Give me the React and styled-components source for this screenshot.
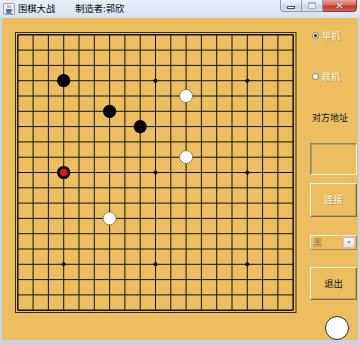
import React from 'react';
import styled, { createGlobalStyle } from 'styled-components';

const Global = createGlobalStyle`
  html, body { margin: 0; padding: 0; background: #ffffff; }
  body { font-family: "Noto Sans CJK SC", "Noto Sans", sans-serif; }
`;

const ORANGE = '#ecbe60';

const Window = styled.div`
  width: 360px;
  height: 344px;
  display: flex;
  flex-direction: column;
  background: #c4d6ec;
  overflow: hidden;
`;

const TitleBar = styled.div`
  height: 18px;
  flex: none;
  display: flex;
  align-items: center;
  padding-left: 3px;
  background: linear-gradient(#e7eef8, #d8e3f1);
`;

const TitleText = styled.span`
  font-size: 9.3px;
  color: #000;
  line-height: 1;
  margin-left: ${(p) => p.$gap}px;
  white-space: nowrap;
`;

const Spacer = styled.div`
  flex: 1;
`;

const WinButtons = styled.div`
  align-self: flex-start;
  display: flex;
  height: 12px;
  margin-right: 3px;
`;

const WinBtn = styled.div`
  width: ${(p) => p.$w}px;
  height: 12px;
  box-sizing: border-box;
  display: flex;
  align-items: center;
  justify-content: center;
  border: 1px solid ${(p) => (p.$close ? '#8d3b34' : '#8e9db3')};
  border-top: none;
  border-left: ${(p) => (p.$first ? '1px solid #8e9db3' : 'none')};
  border-bottom-left-radius: ${(p) => (p.$first ? 4 : 0)}px;
  border-bottom-right-radius: ${(p) => (p.$close ? 4 : 0)}px;
  background: ${(p) =>
    p.$close
      ? 'linear-gradient(#e7a69c 0%, #d46c5f 45%, #c0392b 55%, #d0614f 100%)'
      : 'linear-gradient(#eef3f9 0%, #dbe4ef 45%, #c8d4e3 55%, #d8e2ee 100%)'};
`;

const MinGlyph = styled.div`
  width: 8px;
  height: 3px;
  margin-top: 3px;
  background: #fff;
  border: 1px solid #4a5568;
  box-sizing: border-box;
`;

const MaxGlyph = styled.div`
  width: 8px;
  height: 7px;
  border: 1px solid #a9b5c4;
  border-top-width: 2px;
  box-sizing: border-box;
  background: #e8eef5;
`;

const CloseGlyph = styled.span`
  font-family: "DejaVu Sans", sans-serif;
  font-weight: bold;
  font-size: 10px;
  line-height: 1;
  color: #fff;
  text-shadow: 0 0 1px #6a1a10;
`;

const Body = styled.div`
  flex: 1;
  display: flex;
  margin: 0 2px 4px 2px;
  background: ${ORANGE};
`;

const BoardSvg = styled.svg`
  display: block;
  flex: none;
`;

const SidePanel = styled.div`
  width: 47px;
  margin-left: 2px;
  display: flex;
  flex-direction: column;
`;

const RadioRow = styled.div`
  height: 12px;
  display: flex;
  align-items: center;
  gap: 3px;
  padding-left: 2px;
  margin-top: ${(p) => p.$mt}px;
`;

const RadioCircle = styled.div`
  width: 7px;
  height: 7px;
  box-sizing: border-box;
  border-radius: 50%;
  border: 1px solid #7d8794;
  background: radial-gradient(circle at 40% 40%, #ffffff 30%, #d4d8dd 100%);
  display: flex;
  align-items: center;
  justify-content: center;
  &::after {
    content: '';
    display: ${(p) => (p.$checked ? 'block' : 'none')};
    width: 3px;
    height: 3px;
    border-radius: 50%;
    background: #111;
  }
`;

const DimText = styled.span`
  font-size: 9px;
  line-height: 1;
  color: #fbf6ea;
  text-shadow: 1px 1px 0 rgba(150, 115, 50, 0.55);
  white-space: nowrap;
`;

const AddrLabel = styled.div`
  height: 12px;
  margin-top: 30px;
  padding-left: 2px;
  font-size: 9px;
  line-height: 12px;
  color: #111;
  white-space: nowrap;
`;

const TextBox = styled.div`
  height: 32px;
  margin-top: 19px;
  box-sizing: border-box;
  border: 1px solid;
  border-color: #8a8272 #f6efdf #f6efdf #8a8272;
  box-shadow: inset 1px 1px 0 #b29c6c;
`;

const PanelButton = styled.div`
  height: ${(p) => p.$h}px;
  margin-top: ${(p) => p.$mt}px;
  box-sizing: border-box;
  border: 1px solid;
  border-color: #faf3e1 #7e6e50 #7e6e50 #faf3e1;
  box-shadow: inset -1px -1px 0 #c29f58;
  display: flex;
  align-items: center;
  justify-content: center;
  font-size: 9.3px;
  line-height: 1;
  color: ${(p) => (p.$disabled ? '#fbf6ea' : '#111')};
  text-shadow: ${(p) => (p.$disabled ? '1px 1px 0 rgba(150,115,50,0.55)' : 'none')};
`;

const Combo = styled.div`
  height: 15px;
  margin-top: 18px;
  box-sizing: border-box;
  border: 1px solid;
  border-color: #f6eed9 #9e8754 #9e8754 #f6eed9;
  display: flex;
  align-items: center;
  padding-left: 2px;
`;

const ComboText = styled.span`
  flex: 1;
  font-size: 9.3px;
  line-height: 1;
  color: #8a7850;
`;

const ComboArrow = styled.div`
  width: 12px;
  height: 11px;
  box-sizing: border-box;
  margin-right: 1px;
  border: 1px solid #c6c6c6;
  background: linear-gradient(#fdfdfd, #e3e3e3);
  display: flex;
  align-items: center;
  justify-content: center;
  &::after {
    content: '';
    border-left: 2.5px solid transparent;
    border-right: 2.5px solid transparent;
    border-top: 3px solid #9a9a9a;
  }
`;

const ColorDot = styled.div`
  width: 24px;
  height: 24px;
  box-sizing: border-box;
  margin-top: 16px;
  align-self: flex-end;
  margin-right: 8px;
  border-radius: 50%;
  background: #fff;
  border: 1px solid #2a2a2a;
`;

const X0 = 17.8;
const Y0 = 34.8;
const STEP = 15.3;
const N = 19;

const stones = [
  { x: 3, y: 3, c: 'b' },
  { x: 6, y: 5, c: 'b' },
  { x: 8, y: 6, c: 'b' },
  { x: 3, y: 9, c: 'r' },
  { x: 11, y: 4, c: 'w' },
  { x: 11, y: 8, c: 'w' },
  { x: 6, y: 12, c: 'w' },
];

const stars = [3, 9, 15].flatMap((a) => [3, 9, 15].map((b) => [a, b]));

function JavaIcon() {
  return (
    <svg width="12" height="12" viewBox="0 0 12 12">
      <rect x="0.5" y="0.5" width="11" height="11" rx="1.5" fill="#eef1f5" stroke="#9aa4b1" />
      <path d="M5 2.2c-1 1 1 1.6 0 2.8M7 2c-1 1 1 1.6 0 2.8" stroke="#e0532d" strokeWidth="0.9" fill="none" />
      <path d="M3 6h5.5v2.2c0 1-1 1.8-2.7 1.8S3 9.2 3 8.2z" fill="#4b78b0" />
      <path d="M8.5 6.6c1.4 0 1.4 1.6 0 1.6" stroke="#4b78b0" strokeWidth="0.8" fill="none" />
      <rect x="2.4" y="10" width="6.8" height="0.8" fill="#4b78b0" />
    </svg>
  );
}

function Board() {
  const end = STEP * (N - 1);
  const lines = [];
  for (let i = 0; i < N; i++) {
    const p = i * STEP;
    const w = i === 0 || i === N - 1 ? 1.5 : 1;
    lines.push(<line key={'v' + i} x1={X0 + p} y1={Y0} x2={X0 + p} y2={Y0 + end} stroke="#111" strokeWidth={w} />);
    lines.push(<line key={'h' + i} x1={X0} y1={Y0 + p} x2={X0 + end} y2={Y0 + p} stroke="#111" strokeWidth={w} />);
  }
  return (
    <BoardSvg width="306" height="322" viewBox="2 18 306 322">
      <rect x="15.5" y="32.5" width="280.5" height="280" fill="none" stroke="#3a2a10" strokeWidth="1" />
      {lines}
      {stars.map(([a, b]) => (
        <circle key={a + '-' + b} cx={X0 + a * STEP} cy={Y0 + b * STEP} r="2" fill="#000" />
      ))}
      {stones.map((s, i) => {
        const cx = X0 + s.x * STEP;
        const cy = Y0 + s.y * STEP;
        if (s.c === 'w') {
          return <circle key={i} cx={cx} cy={cy} r="6.5" fill="#fff" stroke="#7a6a50" strokeWidth="0.8" />;
        }
        return (
          <g key={i}>
            <circle cx={cx} cy={cy} r="6.6" fill="#000" />
            {s.c === 'r' && <circle cx={cx} cy={cy} r="3.8" fill="#e3141b" />}
          </g>
        );
      })}
    </BoardSvg>
  );
}

export default function App() {
  return (
    <>
      <Global />
      <Window>
        <TitleBar>
          <JavaIcon />
          <TitleText $gap={3}>围棋大战</TitleText>
          <TitleText $gap={20}>制造者:郭欣</TitleText>
          <Spacer />
          <WinButtons>
            <WinBtn $w={22} $first>
              <MinGlyph />
            </WinBtn>
            <WinBtn $w={21}>
              <MaxGlyph />
            </WinBtn>
            <WinBtn $w={34} $close>
              <CloseGlyph>✕</CloseGlyph>
            </WinBtn>
          </WinButtons>
        </TitleBar>
        <Body>
          <Board />
          <SidePanel>
            <RadioRow $mt={11}>
              <RadioCircle $checked />
              <DimText>单机</DimText>
            </RadioRow>
            <RadioRow $mt={29}>
              <RadioCircle />
              <DimText>联机</DimText>
            </RadioRow>
            <AddrLabel>对方地址</AddrLabel>
            <TextBox />
            <PanelButton $h={34} $mt={8} $disabled>连接</PanelButton>
            <Combo>
              <ComboText>黑</ComboText>
              <ComboArrow />
            </Combo>
            <PanelButton $h={33} $mt={17}>退出</PanelButton>
            <ColorDot />
          </SidePanel>
        </Body>
      </Window>
    </>
  );
}
